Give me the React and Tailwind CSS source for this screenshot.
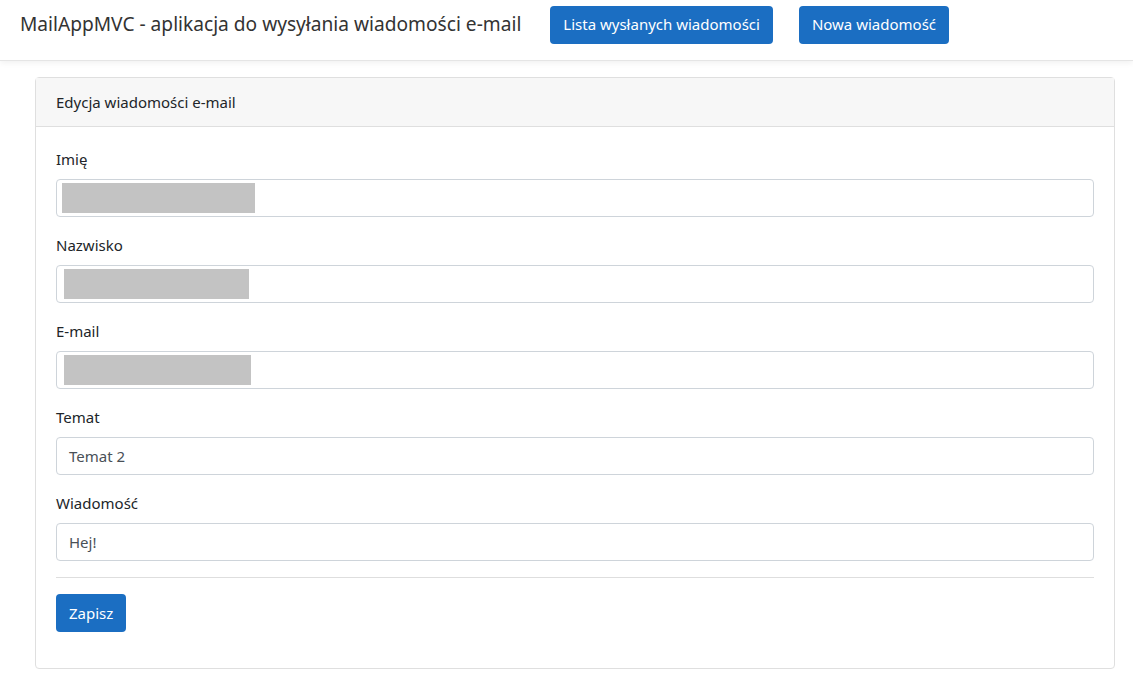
export default function App() {
  const fields = [
    { label: "Imię", value: "", redact: "ml-[5px] w-[193px]" },
    { label: "Nazwisko", value: "", redact: "ml-[7px] w-[185px]" },
    { label: "E-mail", value: "", redact: "ml-[7px] w-[187px]" },
    { label: "Temat", value: "Temat 2" },
    { label: "Wiadomość", value: "Hej!" },
  ];

  return (
    <div className="min-h-screen bg-white text-[#212529] font-['Segoe_UI','Noto_Sans',sans-serif]">
      {/* Navbar */}
      <nav className="h-[61px] flex items-center pb-[11px] border-b border-[#e5e5e5] shadow-[0_2px_6px_rgba(0,0,0,0.06)] bg-white">
        <span className="ml-[20px] text-[19.15px] text-[#333]">
          MailAppMVC - aplikacja do wysyłania wiadomości e-mail
        </span>
        <button className="ml-[29px] h-[38px] px-[13px] rounded-[4px] bg-[#1b6ec2] text-white text-[15px]">
          Lista wysłanych wiadomości
        </button>
        <button className="ml-[26px] h-[38px] px-[13px] rounded-[4px] bg-[#1b6ec2] text-white text-[15px]">
          Nowa wiadomość
        </button>
      </nav>

      {/* Card */}
      <div className="pl-[35px] pr-[18px] pt-[16px] pb-[24px]">
        <div className="border border-[#dfdfdf] rounded-[4px]">
          <div className="h-[49px] flex items-center px-[20px] bg-[#f7f7f7] border-b border-[#dfdfdf] text-[15px]">
            Edycja wiadomości e-mail
          </div>
          <div className="px-[20px] pt-[20px] pb-[36px]">
            {fields.map((f) => (
              <div key={f.label} className="mb-[16px]">
                <label className="block text-[15px] leading-[24px] mb-[8px]">{f.label}</label>
                {f.redact ? (
                  <div className="h-[38px] border border-[#ced4da] rounded-[4px] flex items-center">
                    <div className={`h-[30px] bg-[#c3c3c3] ${f.redact}`} />
                  </div>
                ) : (
                  <div className="h-[38px] border border-[#ced4da] rounded-[4px] flex items-center px-[12px] text-[15px] text-[#495057]">
                    {f.value}
                  </div>
                )}
              </div>
            ))}
            <hr className="border-t border-[#dedede] mt-[0px] mb-[16px]" />
            <button className="h-[38px] px-[13px] rounded-[4px] bg-[#1b6ec2] text-white text-[15px]">
              Zapisz
            </button>
          </div>
        </div>
      </div>
    </div>
  );
}
